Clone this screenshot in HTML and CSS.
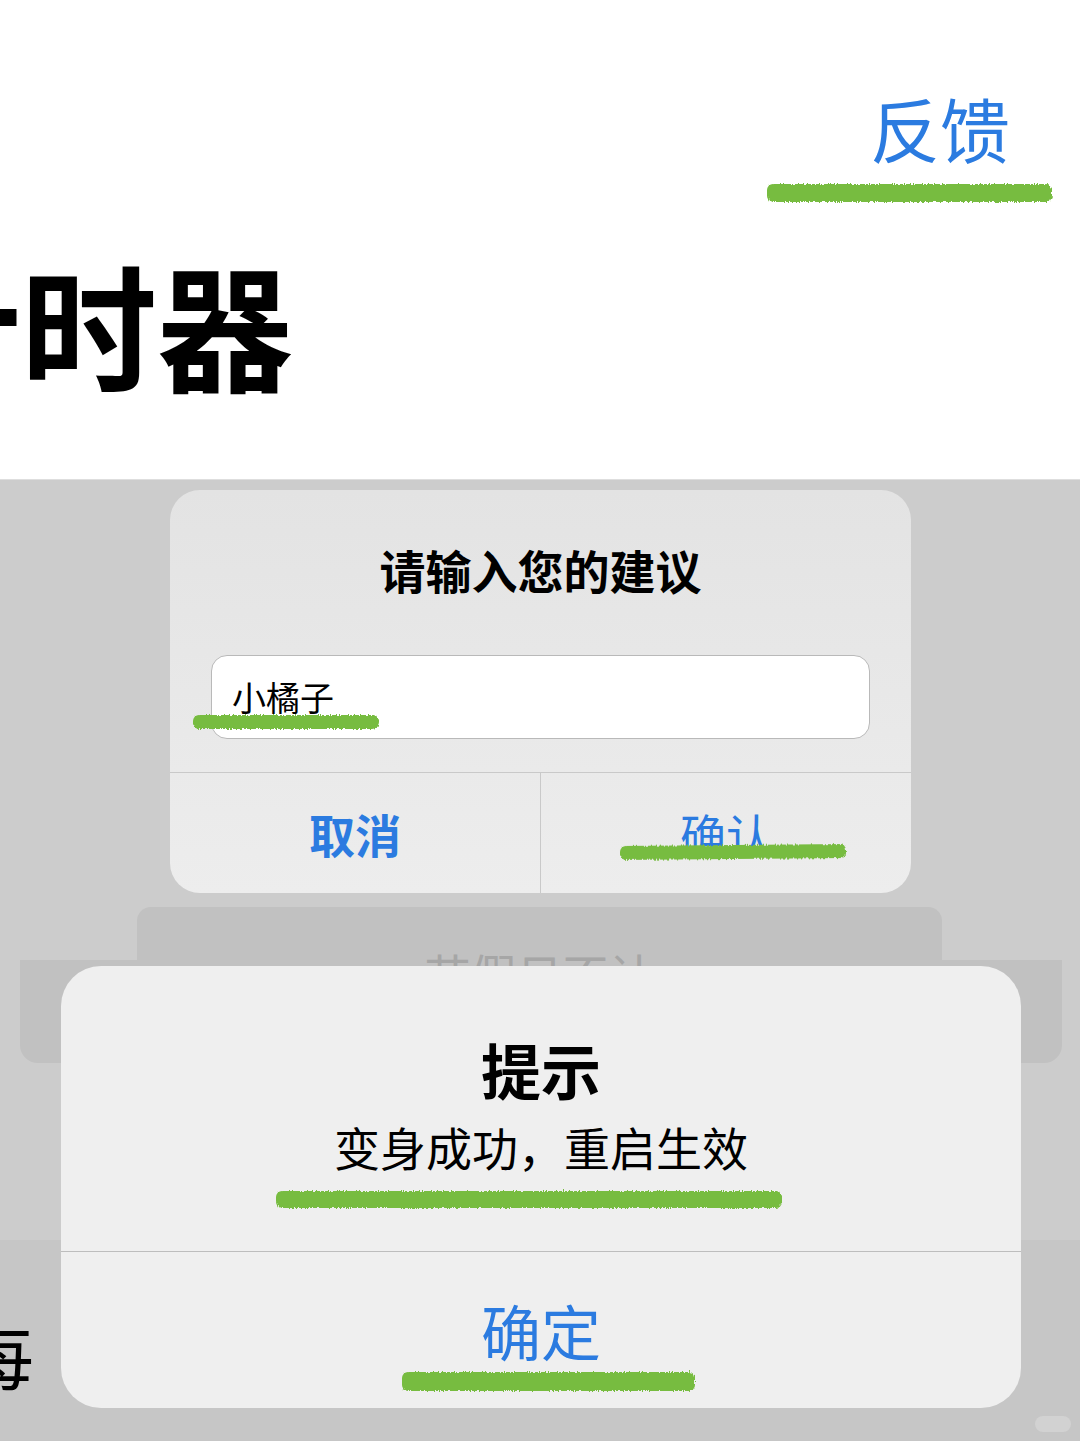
FILE: index.html
```html
<!DOCTYPE html>
<html lang="zh-CN">
<head>
<meta charset="utf-8">
<title>计时器 · 反馈</title>
<link rel="stylesheet" href="styles.css">
</head>
<body>
<svg class="defs" aria-hidden="true">
  <filter id="rough" x="-5%" y="-60%" width="110%" height="220%">
    <feTurbulence type="fractalNoise" baseFrequency="0.8 0.25" numOctaves="2" seed="7" result="noise"/>
    <feDisplacementMap in="SourceGraphic" in2="noise" scale="4" xChannelSelector="R" yChannelSelector="G"/>
  </filter>
</svg>

<section class="top">
  <nav class="nav">
    <span class="nav-link">反馈<i class="mark mark-nav"></i></span>
  </nav>
  <h1 class="title">计时器</h1>
</section>

<section class="stage">
  <div class="alert alert-input">
    <h2 class="alert-title">请输入您的建议</h2>
    <div class="field">
      <span class="field-value">小橘子</span>
      <i class="mark mark-field"></i>
    </div>
    <div class="actions">
      <button class="action action-strong">取消</button>
      <button class="action">确认<i class="mark mark-confirm"></i></button>
    </div>
  </div>

  <div class="backcard">
    <div class="backcard-head"><span class="backcard-label">节假日不计</span></div>
    <div class="backcard-body"></div>
  </div>

  <div class="alert alert-tip">
    <h2 class="tip-title">提示</h2>
    <p class="tip-msg">变身成功，重启生效</p>
    <i class="mark mark-msg"></i>
    <div class="tip-actions">
      <button class="action action-big">确定</button>
    </div>
    <i class="mark mark-ok"></i>
  </div>

  <div class="under-row"><span class="under-text">每</span></div>

  <span class="badge"></span>
</section>
</body>
</html>
```

FILE: styles.css
```css
* {
  box-sizing: border-box;
}

html, body {
  margin: 0;
  padding: 0;
}

body {
  width: 1080px;
  height: 1441px;
  overflow: hidden;
  background: #ffffff;
  font-family: "Noto Sans CJK SC", "Noto Sans", sans-serif;
  color: #000;
}

.defs {
  position: absolute;
  width: 0;
  height: 0;
}

/* green highlighter strokes */
.mark {
  position: absolute;
  display: block;
  background: #77bc3f;
  border-radius: 6px;
  filter: url(#rough);
}

/* ---------- top white header ---------- */
.top {
  height: 480px;
  border-bottom: 1px solid #dedede;
  background: #fff;
  overflow: hidden;
}

.nav {
  display: flex;
  justify-content: flex-end;
  padding: 88px 70px 0 0;
  height: 215px;
}

.nav-link {
  position: relative;
  font-size: 70px;
  line-height: 80px;
  color: #2b7be0;
  font-weight: 400;
}

.mark-nav {
  left: -103px;
  top: 96px;
  width: 285px;
  height: 18px;
}

.title {
  margin: 40px 0 0 -115px;
  font-size: 136px;
  line-height: 136px;
  font-weight: 700;
  letter-spacing: 0;
  white-space: nowrap;
}

/* ---------- grey stage with alerts ---------- */
.stage {
  position: relative;
  height: 961px;
  background: linear-gradient(to bottom, #cccccc 0, #cccccc 760px, #c6c6c6 760px);
  padding-top: 10px;
  overflow: hidden;
}

.alert {
  position: relative;
  z-index: 1;
}

.alert-input {
  width: 741px;
  height: 403px;
  margin-left: 170px;
  border-radius: 30px;
  background: linear-gradient(to bottom, #e3e3e3, #ededed);
  overflow: visible;
}

.alert-title {
  margin: 0;
  padding-top: 51px;
  font-size: 46px;
  line-height: 56px;
  font-weight: 700;
  text-align: center;
}

.field {
  position: relative;
  display: flex;
  align-items: center;
  height: 84px;
  margin: 58px 41px 33px;
  padding: 0 0 0 20px;
  background: #fff;
  border: 1px solid #b9b9b9;
  border-radius: 16px;
}

.field-value {
  font-size: 34px;
  line-height: 40px;
}

.mark-field {
  left: -19px;
  top: 59px;
  width: 186px;
  height: 14px;
}

.actions {
  display: flex;
  height: 121px;
  border-top: 1px solid #c9c9c9;
}

.action {
  position: relative;
  flex: 1;
  border: 0;
  margin: 0;
  padding: 0;
  background: transparent;
  font-family: inherit;
  font-size: 46px;
  line-height: 56px;
  color: #2b7be0;
  font-weight: 400;
}

.action + .action {
  border-left: 1px solid #c9c9c9;
}

.action-strong {
  font-weight: 700;
}

.mark-confirm {
  left: 79px;
  top: 72px;
  width: 226px;
  height: 14px;
  transform: rotate(-0.5deg);
}

/* stacked card behind the tip alert */
.backcard {
  margin-top: 14px;
}

.backcard-head {
  width: 805px;
  height: 53px;
  margin-left: 137px;
  background: #c1c1c1;
  border-radius: 14px 14px 0 0;
  text-align: center;
  padding-top: 38px;
}

.backcard-label {
  font-size: 46px;
  line-height: 56px;
  color: #a6a6a6;
  white-space: nowrap;
}

.backcard-body {
  width: 1042px;
  height: 103px;
  margin-left: 20px;
  background: #c1c1c1;
  border-radius: 0 0 18px 18px;
}

.alert-tip {
  width: 960px;
  height: 442px;
  margin: -97px 0 0 61px;
  border-radius: 40px;
  background: #efefef;
}

.tip-title {
  margin: 0;
  padding-top: 68px;
  font-size: 60px;
  line-height: 70px;
  font-weight: 700;
  text-align: center;
}

.tip-msg {
  margin: 14px 0 0;
  font-size: 46px;
  line-height: 56px;
  text-align: center;
}

.mark-msg {
  left: 215px;
  top: 225px;
  width: 506px;
  height: 17px;
}

.tip-actions {
  display: flex;
  height: 157px;
  margin-top: 77px;
  border-top: 1px solid #bdbdbd;
}

.action-big {
  font-size: 60px;
  line-height: 70px;
}

.mark-ok {
  left: 341px;
  top: 406px;
  width: 293px;
  height: 19px;
}

.under-row {
  margin: -100px 0 0 -38px;
  height: 90px;
}

.under-text {
  font-size: 72px;
  line-height: 90px;
}

.badge {
  position: absolute;
  right: 9px;
  bottom: 9px;
  width: 36px;
  height: 16px;
  border-radius: 8px;
  background: #d2d2d2;
}
```
